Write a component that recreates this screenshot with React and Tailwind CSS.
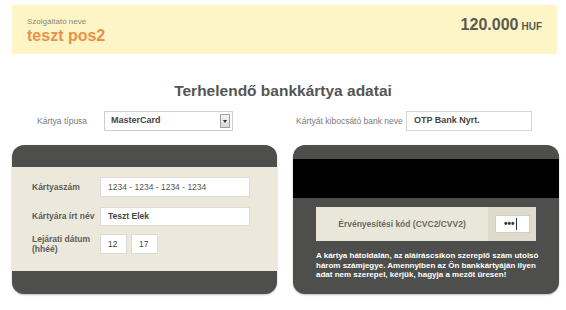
export default function App() {
  return (
    <div className="w-[566px] h-[310px] bg-white overflow-hidden font-['Liberation_Sans',Arial,sans-serif]">
      {/* merchant banner */}
      <div className="mx-[12px] mt-[5px] h-[49px] w-[545px] bg-[#fdf5c6] flex justify-between px-[15px]">
        <div className="pt-[12px]">
          <div className="text-[8px] leading-[10px] text-[#8a8a7a]">Szolgáltató neve</div>
          <div className="text-[16px] leading-[18px] font-bold text-[#e8914a]">teszt pos2</div>
        </div>
        <div className="pt-[8px] pr-[0px] text-[#5a5a52] font-bold">
          <span className="text-[16px]">120.000</span>
          <span className="text-[10px] ml-[3px]">HUF</span>
        </div>
      </div>

      <h1 className="mt-[27px] text-center text-[15.5px] leading-[20px] font-bold text-[#555]">
        Terhelendő bankkártya adatai
      </h1>

      {/* card type + bank */}
      <div className="mt-[10px] flex items-center h-[20px]">
        <div className="ml-[37px] w-[67px] text-[8.5px] text-[#7a7a7a]">Kártya típusa</div>
        <div className="w-[129px] h-[20px] border border-[#cfcfcf] bg-white flex items-center justify-between pl-[6px] pr-[2px]">
          <span className="text-[9px] font-bold text-[#444]">MasterCard</span>
          <span className="w-[10px] h-[14px] border border-[#a0a0a0] bg-gradient-to-b from-[#f4f4f4] to-[#d8d8d8] flex items-center justify-center">
            <span className="w-0 h-0 border-l-[2.5px] border-r-[2.5px] border-t-[3px] border-l-transparent border-r-transparent border-t-[#333]" />
          </span>
        </div>
        <div className="ml-[63px] w-[110px] text-[8.5px] text-[#7a7a7a]">Kártyát kibocsátó bank neve</div>
        <div className="w-[126px] h-[20px] border border-[#d6d6d6] bg-white flex items-center pl-[7px]">
          <span className="text-[9px] font-bold text-[#444]">OTP Bank Nyrt.</span>
        </div>
      </div>

      {/* cards */}
      <div className="mt-[14px] flex gap-[16px] pl-[12px]">
        {/* front */}
        <div className="w-[265px] h-[149px] rounded-[12px] overflow-hidden bg-[#4e4e4c] flex flex-col shadow-[0_1px_2px_rgba(0,0,0,0.25)]">
          <div className="h-[22px]" />
          <div className="h-[104px] bg-[#ece9dc] pl-[20px] pt-[10px] flex flex-col gap-[10px]">
            <div className="flex items-center h-[20px]">
              <div className="w-[68px] text-[8.5px] font-bold text-[#5c5c58]">Kártyaszám</div>
              <div className="w-[150px] h-[20px] bg-white border border-[#dcdcd4] flex items-center pl-[7px] text-[8.5px] text-[#555]">
                1234 - 1234 - 1234 - 1234
              </div>
            </div>
            <div className="flex items-center h-[19px]">
              <div className="w-[68px] text-[8.5px] font-bold text-[#5c5c58]">Kártyára írt név</div>
              <div className="w-[150px] h-[19px] bg-white border border-[#dcdcd4] flex items-center pl-[7px] text-[8.5px] font-bold text-[#444]">
                Teszt Elek
              </div>
            </div>
            <div className="flex items-center h-[20px] mt-[-2px]">
              <div className="w-[68px] text-[8.5px] leading-[10px] font-bold text-[#5c5c58]">
                Lejárati dátum
                <br />
                (hhéé)
              </div>
              <div className="w-[27px] h-[20px] bg-white border border-[#dcdcd4] flex items-center pl-[7px] text-[8.5px] text-[#444]">12</div>
              <div className="ml-[4px] w-[27px] h-[20px] bg-white border border-[#dcdcd4] flex items-center pl-[7px] text-[8.5px] text-[#444]">17</div>
            </div>
          </div>
        </div>

        {/* back */}
        <div className="w-[266px] h-[149px] rounded-[12px] overflow-hidden bg-[#4e4e4c] flex flex-col shadow-[0_1px_2px_rgba(0,0,0,0.25)]">
          <div className="h-[14px]" />
          <div className="h-[39px] bg-black" />
          <div className="mt-[9px] ml-[23px] w-[220px] h-[34px] bg-[#e9e7d9] flex">
            <div className="flex-1 flex items-center justify-center text-[8.5px] font-bold text-[#6a6a62]">
              Érvényesítési kód (CVC2/CVV2)
            </div>
            <div className="w-[48px] bg-[#dddbcc] flex items-center pl-[7px]">
              <div className="w-[35px] h-[18px] bg-white border border-[#cfcfc4] flex items-center pl-[8px] text-[10px] leading-none font-bold text-[#333]">
                •••<span className="ml-[1px] w-px h-[12px] bg-[#333]" />
              </div>
            </div>
          </div>
          <div className="mt-[10px] ml-[23px] text-[8px] leading-[9.5px] font-bold text-white">
            A kártya hátoldalán, az aláíráscsíkon szereplő szám utolsó
            <br />
            három számjegye. Amennyiben az Ön bankkártyáján ilyen
            <br />
            adat nem szerepel, kérjük, hagyja a mezőt üresen!
          </div>
        </div>
      </div>
    </div>
  );
}
